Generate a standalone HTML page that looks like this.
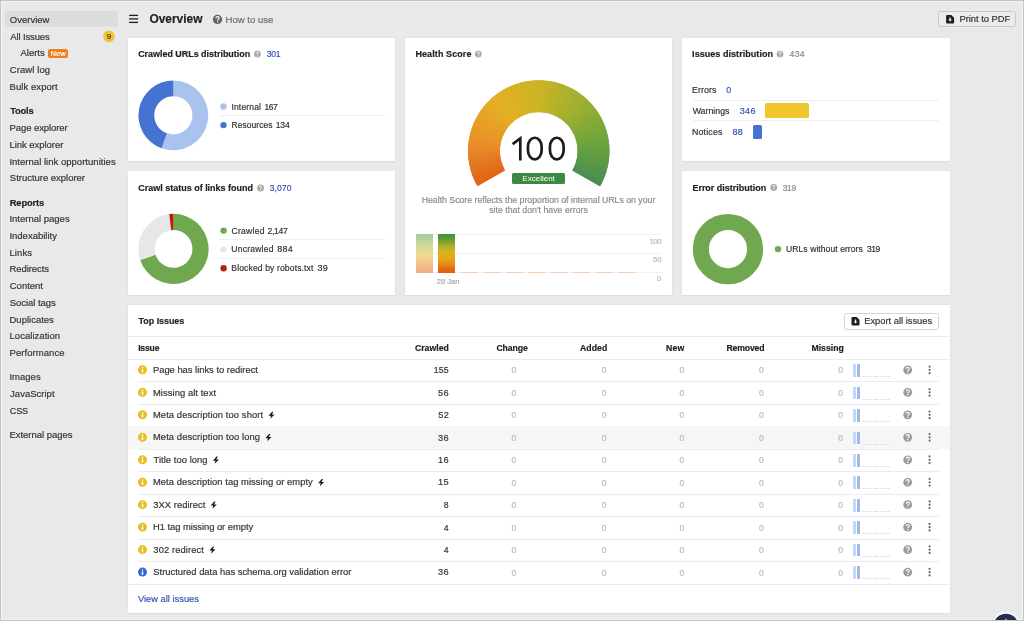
<!DOCTYPE html>
<html><head><meta charset="utf-8"><title>Overview</title>
<style>
html,body{margin:0;padding:0;}
body{width:1024px;height:621px;overflow:hidden;background:#e8e9eb;font-family:"Liberation Sans",sans-serif;}
#p{position:relative;width:1024px;height:621px;overflow:hidden;background:#e8e9eb;}
.t{position:absolute;white-space:nowrap;-webkit-text-stroke:0.18px currentColor;}
#tx{position:absolute;left:0;top:0;width:1024px;height:621px;will-change:transform;}
.b{position:absolute;}
#ov{position:absolute;left:0;top:0;}
#fr{position:absolute;left:0;top:0;width:1022px;height:619px;border:1px solid #c3c4c4;pointer-events:none;}
#fi{position:absolute;left:1px;top:1px;width:1020px;height:617px;border:1px solid #f1f2f4;pointer-events:none;}
</style></head><body><div id="p">
<div id="fi"></div>
<div class="b" style="left:5.00px;top:11.00px;width:112.50px;height:16.00px;background:#dcdddf;border-radius:2.5px;"></div>
<div class="b" style="left:48.10px;top:48.70px;width:20.10px;height:9.10px;background:#e8821e;border-radius:2px;"></div>
<div class="b" style="left:937.90px;top:10.60px;width:78.30px;height:16.90px;background:#ebecee;border:1px solid #c7c8cb;border-radius:2.5px;box-sizing:border-box;"></div>
<div class="b" style="left:127.80px;top:37.90px;width:267.30px;height:122.95px;background:#fff;box-shadow:0 0 1.2px rgba(50,55,75,0.10),0 1px 1px rgba(40,50,70,0.04);"></div>
<div class="b" style="left:127.80px;top:171.10px;width:267.30px;height:124.10px;background:#fff;box-shadow:0 0 1.2px rgba(50,55,75,0.10),0 1px 1px rgba(40,50,70,0.04);"></div>
<div class="b" style="left:404.95px;top:37.90px;width:267.35px;height:257.30px;background:#fff;box-shadow:0 0 1.2px rgba(50,55,75,0.10),0 1px 1px rgba(40,50,70,0.04);"></div>
<div class="b" style="left:682.35px;top:37.90px;width:267.30px;height:122.95px;background:#fff;box-shadow:0 0 1.2px rgba(50,55,75,0.10),0 1px 1px rgba(40,50,70,0.04);"></div>
<div class="b" style="left:682.35px;top:171.10px;width:267.30px;height:124.10px;background:#fff;box-shadow:0 0 1.2px rgba(50,55,75,0.10),0 1px 1px rgba(40,50,70,0.04);"></div>
<div class="b" style="left:127.80px;top:304.80px;width:821.85px;height:308.00px;background:#fff;box-shadow:0 0 1.2px rgba(50,55,75,0.10),0 1px 1px rgba(40,50,70,0.04);"></div>
<div class="b" style="left:219.00px;top:115.00px;width:166.00px;height:1.00px;background:#eeeff0;"></div>
<div class="b" style="left:219.00px;top:239.20px;width:166.00px;height:1.00px;background:#eeeff0;"></div>
<div class="b" style="left:219.00px;top:258.00px;width:166.00px;height:1.00px;background:#eeeff0;"></div>
<div class="b" style="left:512.20px;top:173.00px;width:52.80px;height:11.10px;background:#3c8a41;border-radius:1.5px;"></div>
<div class="b" style="left:415.50px;top:233.70px;width:245.00px;height:1.00px;background:#f0f0f1;"></div>
<div class="b" style="left:415.50px;top:252.70px;width:245.00px;height:1.00px;background:#f0f0f1;"></div>
<div class="b" style="left:415.50px;top:272.40px;width:245.00px;height:1.00px;background:#f0f0f1;"></div>
<div class="b" style="left:415.90px;top:234.00px;width:17.00px;height:39.00px;background:linear-gradient(to bottom,#a6cc9d 0%,#b4d19c 14%,#d3da98 32%,#ebdb8d 52%,#f2cd8b 70%,#f1b888 84%,#f0ae87 100%);"></div>
<div class="b" style="left:438.10px;top:234.00px;width:17.10px;height:39.00px;background:linear-gradient(to bottom,#3f8f3c 0%,#5a9a36 12%,#a8ad2a 30%,#d8b220 45%,#e8a81e 62%,#e68a1a 78%,#e3680f 90%,#e05e0d 100%);"></div>
<div class="b" style="left:461.10px;top:272.00px;width:17.00px;height:1.20px;background:#f6cdb0;"></div>
<div class="b" style="left:483.50px;top:272.00px;width:17.00px;height:1.20px;background:#f6cdb0;"></div>
<div class="b" style="left:505.90px;top:272.00px;width:17.00px;height:1.20px;background:#f6cdb0;"></div>
<div class="b" style="left:528.30px;top:272.00px;width:17.00px;height:1.20px;background:#f6cdb0;"></div>
<div class="b" style="left:550.70px;top:272.00px;width:17.00px;height:1.20px;background:#f6cdb0;"></div>
<div class="b" style="left:573.10px;top:272.00px;width:17.00px;height:1.20px;background:#f6cdb0;"></div>
<div class="b" style="left:595.50px;top:272.00px;width:17.00px;height:1.20px;background:#f6cdb0;"></div>
<div class="b" style="left:617.90px;top:272.00px;width:17.00px;height:1.20px;background:#f6cdb0;"></div>
<div class="b" style="left:692.60px;top:99.60px;width:246.40px;height:1.00px;background:#eeeff0;"></div>
<div class="b" style="left:765.40px;top:103.40px;width:43.60px;height:14.20px;background:#f0c62a;border-radius:1.5px;"></div>
<div class="b" style="left:692.60px;top:120.20px;width:246.40px;height:1.00px;background:#eeeff0;"></div>
<div class="b" style="left:753.20px;top:124.60px;width:8.80px;height:14.20px;background:#4673d1;border-radius:1.5px;"></div>
<div class="b" style="left:843.70px;top:313.10px;width:95.50px;height:16.50px;background:#fff;border:1px solid #d4d5d7;border-radius:2.5px;box-sizing:border-box;"></div>
<div class="b" style="left:127.80px;top:336.40px;width:821.85px;height:1.00px;background:#ebecee;"></div>
<div class="b" style="left:127.80px;top:358.90px;width:821.85px;height:1.00px;background:#ebecee;"></div>
<div class="b" style="left:853.10px;top:364.10px;width:2.90px;height:12.60px;background:#c6d6f3;"></div>
<div class="b" style="left:857.20px;top:364.10px;width:2.90px;height:12.60px;background:#9eb9ea;"></div>
<div class="b" style="left:861.60px;top:376.10px;width:2.90px;height:0.80px;background:#e3e5e9;"></div>
<div class="b" style="left:865.30px;top:376.10px;width:2.90px;height:0.80px;background:#e3e5e9;"></div>
<div class="b" style="left:869.00px;top:376.10px;width:2.90px;height:0.80px;background:#e3e5e9;"></div>
<div class="b" style="left:872.70px;top:376.10px;width:2.90px;height:0.80px;background:#e3e5e9;"></div>
<div class="b" style="left:876.40px;top:376.10px;width:2.90px;height:0.80px;background:#e3e5e9;"></div>
<div class="b" style="left:880.10px;top:376.10px;width:2.90px;height:0.80px;background:#e3e5e9;"></div>
<div class="b" style="left:883.80px;top:376.10px;width:2.90px;height:0.80px;background:#e3e5e9;"></div>
<div class="b" style="left:887.50px;top:376.10px;width:2.90px;height:0.80px;background:#e3e5e9;"></div>
<div class="b" style="left:138.00px;top:381.30px;width:801.20px;height:1.00px;background:#ebecee;"></div>
<div class="b" style="left:853.10px;top:386.57px;width:2.90px;height:12.60px;background:#c6d6f3;"></div>
<div class="b" style="left:857.20px;top:386.57px;width:2.90px;height:12.60px;background:#9eb9ea;"></div>
<div class="b" style="left:861.60px;top:398.57px;width:2.90px;height:0.80px;background:#e3e5e9;"></div>
<div class="b" style="left:865.30px;top:398.57px;width:2.90px;height:0.80px;background:#e3e5e9;"></div>
<div class="b" style="left:869.00px;top:398.57px;width:2.90px;height:0.80px;background:#e3e5e9;"></div>
<div class="b" style="left:872.70px;top:398.57px;width:2.90px;height:0.80px;background:#e3e5e9;"></div>
<div class="b" style="left:876.40px;top:398.57px;width:2.90px;height:0.80px;background:#e3e5e9;"></div>
<div class="b" style="left:880.10px;top:398.57px;width:2.90px;height:0.80px;background:#e3e5e9;"></div>
<div class="b" style="left:883.80px;top:398.57px;width:2.90px;height:0.80px;background:#e3e5e9;"></div>
<div class="b" style="left:887.50px;top:398.57px;width:2.90px;height:0.80px;background:#e3e5e9;"></div>
<div class="b" style="left:138.00px;top:403.77px;width:801.20px;height:1.00px;background:#ebecee;"></div>
<div class="b" style="left:853.10px;top:409.04px;width:2.90px;height:12.60px;background:#c6d6f3;"></div>
<div class="b" style="left:857.20px;top:409.04px;width:2.90px;height:12.60px;background:#9eb9ea;"></div>
<div class="b" style="left:861.60px;top:421.04px;width:2.90px;height:0.80px;background:#e3e5e9;"></div>
<div class="b" style="left:865.30px;top:421.04px;width:2.90px;height:0.80px;background:#e3e5e9;"></div>
<div class="b" style="left:869.00px;top:421.04px;width:2.90px;height:0.80px;background:#e3e5e9;"></div>
<div class="b" style="left:872.70px;top:421.04px;width:2.90px;height:0.80px;background:#e3e5e9;"></div>
<div class="b" style="left:876.40px;top:421.04px;width:2.90px;height:0.80px;background:#e3e5e9;"></div>
<div class="b" style="left:880.10px;top:421.04px;width:2.90px;height:0.80px;background:#e3e5e9;"></div>
<div class="b" style="left:883.80px;top:421.04px;width:2.90px;height:0.80px;background:#e3e5e9;"></div>
<div class="b" style="left:887.50px;top:421.04px;width:2.90px;height:0.80px;background:#e3e5e9;"></div>
<div class="b" style="left:138.00px;top:426.24px;width:801.20px;height:1.00px;background:#ebecee;"></div>
<div class="b" style="left:127.80px;top:426.21px;width:821.85px;height:22.50px;background:#f6f6f7;"></div>
<div class="b" style="left:853.10px;top:431.51px;width:2.90px;height:12.60px;background:#c6d6f3;"></div>
<div class="b" style="left:857.20px;top:431.51px;width:2.90px;height:12.60px;background:#9eb9ea;"></div>
<div class="b" style="left:861.60px;top:443.51px;width:2.90px;height:0.80px;background:#e3e5e9;"></div>
<div class="b" style="left:865.30px;top:443.51px;width:2.90px;height:0.80px;background:#e3e5e9;"></div>
<div class="b" style="left:869.00px;top:443.51px;width:2.90px;height:0.80px;background:#e3e5e9;"></div>
<div class="b" style="left:872.70px;top:443.51px;width:2.90px;height:0.80px;background:#e3e5e9;"></div>
<div class="b" style="left:876.40px;top:443.51px;width:2.90px;height:0.80px;background:#e3e5e9;"></div>
<div class="b" style="left:880.10px;top:443.51px;width:2.90px;height:0.80px;background:#e3e5e9;"></div>
<div class="b" style="left:883.80px;top:443.51px;width:2.90px;height:0.80px;background:#e3e5e9;"></div>
<div class="b" style="left:887.50px;top:443.51px;width:2.90px;height:0.80px;background:#e3e5e9;"></div>
<div class="b" style="left:138.00px;top:448.71px;width:801.20px;height:1.00px;background:#ebecee;"></div>
<div class="b" style="left:853.10px;top:453.98px;width:2.90px;height:12.60px;background:#c6d6f3;"></div>
<div class="b" style="left:857.20px;top:453.98px;width:2.90px;height:12.60px;background:#9eb9ea;"></div>
<div class="b" style="left:861.60px;top:465.98px;width:2.90px;height:0.80px;background:#e3e5e9;"></div>
<div class="b" style="left:865.30px;top:465.98px;width:2.90px;height:0.80px;background:#e3e5e9;"></div>
<div class="b" style="left:869.00px;top:465.98px;width:2.90px;height:0.80px;background:#e3e5e9;"></div>
<div class="b" style="left:872.70px;top:465.98px;width:2.90px;height:0.80px;background:#e3e5e9;"></div>
<div class="b" style="left:876.40px;top:465.98px;width:2.90px;height:0.80px;background:#e3e5e9;"></div>
<div class="b" style="left:880.10px;top:465.98px;width:2.90px;height:0.80px;background:#e3e5e9;"></div>
<div class="b" style="left:883.80px;top:465.98px;width:2.90px;height:0.80px;background:#e3e5e9;"></div>
<div class="b" style="left:887.50px;top:465.98px;width:2.90px;height:0.80px;background:#e3e5e9;"></div>
<div class="b" style="left:138.00px;top:471.18px;width:801.20px;height:1.00px;background:#ebecee;"></div>
<div class="b" style="left:853.10px;top:476.45px;width:2.90px;height:12.60px;background:#c6d6f3;"></div>
<div class="b" style="left:857.20px;top:476.45px;width:2.90px;height:12.60px;background:#9eb9ea;"></div>
<div class="b" style="left:861.60px;top:488.45px;width:2.90px;height:0.80px;background:#e3e5e9;"></div>
<div class="b" style="left:865.30px;top:488.45px;width:2.90px;height:0.80px;background:#e3e5e9;"></div>
<div class="b" style="left:869.00px;top:488.45px;width:2.90px;height:0.80px;background:#e3e5e9;"></div>
<div class="b" style="left:872.70px;top:488.45px;width:2.90px;height:0.80px;background:#e3e5e9;"></div>
<div class="b" style="left:876.40px;top:488.45px;width:2.90px;height:0.80px;background:#e3e5e9;"></div>
<div class="b" style="left:880.10px;top:488.45px;width:2.90px;height:0.80px;background:#e3e5e9;"></div>
<div class="b" style="left:883.80px;top:488.45px;width:2.90px;height:0.80px;background:#e3e5e9;"></div>
<div class="b" style="left:887.50px;top:488.45px;width:2.90px;height:0.80px;background:#e3e5e9;"></div>
<div class="b" style="left:138.00px;top:493.65px;width:801.20px;height:1.00px;background:#ebecee;"></div>
<div class="b" style="left:853.10px;top:498.92px;width:2.90px;height:12.60px;background:#c6d6f3;"></div>
<div class="b" style="left:857.20px;top:498.92px;width:2.90px;height:12.60px;background:#9eb9ea;"></div>
<div class="b" style="left:861.60px;top:510.92px;width:2.90px;height:0.80px;background:#e3e5e9;"></div>
<div class="b" style="left:865.30px;top:510.92px;width:2.90px;height:0.80px;background:#e3e5e9;"></div>
<div class="b" style="left:869.00px;top:510.92px;width:2.90px;height:0.80px;background:#e3e5e9;"></div>
<div class="b" style="left:872.70px;top:510.92px;width:2.90px;height:0.80px;background:#e3e5e9;"></div>
<div class="b" style="left:876.40px;top:510.92px;width:2.90px;height:0.80px;background:#e3e5e9;"></div>
<div class="b" style="left:880.10px;top:510.92px;width:2.90px;height:0.80px;background:#e3e5e9;"></div>
<div class="b" style="left:883.80px;top:510.92px;width:2.90px;height:0.80px;background:#e3e5e9;"></div>
<div class="b" style="left:887.50px;top:510.92px;width:2.90px;height:0.80px;background:#e3e5e9;"></div>
<div class="b" style="left:138.00px;top:516.12px;width:801.20px;height:1.00px;background:#ebecee;"></div>
<div class="b" style="left:853.10px;top:521.39px;width:2.90px;height:12.60px;background:#c6d6f3;"></div>
<div class="b" style="left:857.20px;top:521.39px;width:2.90px;height:12.60px;background:#9eb9ea;"></div>
<div class="b" style="left:861.60px;top:533.39px;width:2.90px;height:0.80px;background:#e3e5e9;"></div>
<div class="b" style="left:865.30px;top:533.39px;width:2.90px;height:0.80px;background:#e3e5e9;"></div>
<div class="b" style="left:869.00px;top:533.39px;width:2.90px;height:0.80px;background:#e3e5e9;"></div>
<div class="b" style="left:872.70px;top:533.39px;width:2.90px;height:0.80px;background:#e3e5e9;"></div>
<div class="b" style="left:876.40px;top:533.39px;width:2.90px;height:0.80px;background:#e3e5e9;"></div>
<div class="b" style="left:880.10px;top:533.39px;width:2.90px;height:0.80px;background:#e3e5e9;"></div>
<div class="b" style="left:883.80px;top:533.39px;width:2.90px;height:0.80px;background:#e3e5e9;"></div>
<div class="b" style="left:887.50px;top:533.39px;width:2.90px;height:0.80px;background:#e3e5e9;"></div>
<div class="b" style="left:138.00px;top:538.59px;width:801.20px;height:1.00px;background:#ebecee;"></div>
<div class="b" style="left:853.10px;top:543.86px;width:2.90px;height:12.60px;background:#c6d6f3;"></div>
<div class="b" style="left:857.20px;top:543.86px;width:2.90px;height:12.60px;background:#9eb9ea;"></div>
<div class="b" style="left:861.60px;top:555.86px;width:2.90px;height:0.80px;background:#e3e5e9;"></div>
<div class="b" style="left:865.30px;top:555.86px;width:2.90px;height:0.80px;background:#e3e5e9;"></div>
<div class="b" style="left:869.00px;top:555.86px;width:2.90px;height:0.80px;background:#e3e5e9;"></div>
<div class="b" style="left:872.70px;top:555.86px;width:2.90px;height:0.80px;background:#e3e5e9;"></div>
<div class="b" style="left:876.40px;top:555.86px;width:2.90px;height:0.80px;background:#e3e5e9;"></div>
<div class="b" style="left:880.10px;top:555.86px;width:2.90px;height:0.80px;background:#e3e5e9;"></div>
<div class="b" style="left:883.80px;top:555.86px;width:2.90px;height:0.80px;background:#e3e5e9;"></div>
<div class="b" style="left:887.50px;top:555.86px;width:2.90px;height:0.80px;background:#e3e5e9;"></div>
<div class="b" style="left:138.00px;top:561.06px;width:801.20px;height:1.00px;background:#ebecee;"></div>
<div class="b" style="left:853.10px;top:566.33px;width:2.90px;height:12.60px;background:#c6d6f3;"></div>
<div class="b" style="left:857.20px;top:566.33px;width:2.90px;height:12.60px;background:#9eb9ea;"></div>
<div class="b" style="left:861.60px;top:578.33px;width:2.90px;height:0.80px;background:#e3e5e9;"></div>
<div class="b" style="left:865.30px;top:578.33px;width:2.90px;height:0.80px;background:#e3e5e9;"></div>
<div class="b" style="left:869.00px;top:578.33px;width:2.90px;height:0.80px;background:#e3e5e9;"></div>
<div class="b" style="left:872.70px;top:578.33px;width:2.90px;height:0.80px;background:#e3e5e9;"></div>
<div class="b" style="left:876.40px;top:578.33px;width:2.90px;height:0.80px;background:#e3e5e9;"></div>
<div class="b" style="left:880.10px;top:578.33px;width:2.90px;height:0.80px;background:#e3e5e9;"></div>
<div class="b" style="left:883.80px;top:578.33px;width:2.90px;height:0.80px;background:#e3e5e9;"></div>
<div class="b" style="left:887.50px;top:578.33px;width:2.90px;height:0.80px;background:#e3e5e9;"></div>
<div class="b" style="left:127.80px;top:583.53px;width:821.85px;height:1.00px;background:#ebecee;"></div>
<svg id="ov" width="1024" height="621" viewBox="0 0 1024 621">
<circle cx="109" cy="36.4" r="5.8" fill="#f0c62a"/>
<rect x="129.1" y="14.75" width="9" height="1.3" fill="#222"/>
<rect x="129.1" y="18.25" width="9" height="1.3" fill="#222"/>
<rect x="129.1" y="21.75" width="9" height="1.3" fill="#222"/>
<g transform="translate(217.50,19.40) scale(1.022)"><circle r="4.5" fill="#636363"/><path d="M-1.55,-1.1C-1.55,-2.1 -0.85,-2.7 0.05,-2.7C0.95,-2.7 1.6,-2.1 1.6,-1.3C1.6,-0.2 0.1,-0.1 0.1,1.0" fill="none" stroke="#fff" stroke-width="1.15"/><circle cx="0.1" cy="2.45" r="0.72" fill="#fff"/></g>
<g transform="translate(946.10,15.00)"><path d="M1,0H5.2L8,2.8V7.6Q8,8.6 7,8.6H1Q0,8.6 0,7.6V1Q0,0 1,0Z" fill="#1f1f1f"/><path d="M3.4,2.6H4.6V4.6H5.8L4,6.6L2.2,4.6H3.4Z" fill="#fff"/></g>
<g transform="translate(257.40,54.10) scale(0.756)"><circle r="4.5" fill="#a8a8a8"/><path d="M-1.55,-1.1C-1.55,-2.1 -0.85,-2.7 0.05,-2.7C0.95,-2.7 1.6,-2.1 1.6,-1.3C1.6,-0.2 0.1,-0.1 0.1,1.0" fill="none" stroke="#fff" stroke-width="1.15"/><circle cx="0.1" cy="2.45" r="0.72" fill="#fff"/></g>
<path d="M173.35,80.45A34.9,34.9 0 1 1 161.59,148.21L166.91,133.33A19.1,19.1 0 1 0 173.35,96.25Z" fill="#a9c3ee"/>
<path d="M161.59,148.21A34.9,34.9 0 0 1 173.35,80.45L173.35,96.25A19.1,19.1 0 0 0 166.91,133.33Z" fill="#4673d1"/>
<circle cx="223.5" cy="106.5" r="3.2" fill="#a9c3ee"/>
<circle cx="223.5" cy="125.1" r="3.2" fill="#4673d1"/>
<g transform="translate(260.60,188.00) scale(0.756)"><circle r="4.5" fill="#a8a8a8"/><path d="M-1.55,-1.1C-1.55,-2.1 -0.85,-2.7 0.05,-2.7C0.95,-2.7 1.6,-2.1 1.6,-1.3C1.6,-0.2 0.1,-0.1 0.1,1.0" fill="none" stroke="#fff" stroke-width="1.15"/><circle cx="0.1" cy="2.45" r="0.72" fill="#fff"/></g>
<path d="M173.50,213.80A35.1,35.1 0 1 1 140.16,259.88L155.55,254.81A18.9,18.9 0 1 0 173.50,230.00Z" fill="#6fa84f"/>
<path d="M140.16,259.88A35.1,35.1 0 0 1 169.22,214.06L171.20,230.14A18.9,18.9 0 0 0 155.55,254.81Z" fill="#e6e7e9"/>
<path d="M169.22,214.06A35.1,35.1 0 0 1 173.50,213.80L173.50,230.00A18.9,18.9 0 0 0 171.20,230.14Z" fill="#b3200f"/>
<circle cx="223.6" cy="230.60" r="3.2" fill="#6fa84f"/>
<circle cx="223.6" cy="249.40" r="3.2" fill="#e6e7e9"/>
<circle cx="223.6" cy="268.20" r="3.2" fill="#b3200f"/>
<g transform="translate(478.30,54.10) scale(0.756)"><circle r="4.5" fill="#a8a8a8"/><path d="M-1.55,-1.1C-1.55,-2.1 -0.85,-2.7 0.05,-2.7C0.95,-2.7 1.6,-2.1 1.6,-1.3C1.6,-0.2 0.1,-0.1 0.1,1.0" fill="none" stroke="#fff" stroke-width="1.15"/><circle cx="0.1" cy="2.45" r="0.72" fill="#fff"/></g>
<path d="M477.52,186.35A70.7,70.7 0 0 1 475.21,181.99L503.88,168.01A38.8,38.8 0 0 0 505.15,170.40Z" fill="rgb(226, 99, 26)"/>
<path d="M476.33,184.19A70.7,70.7 0 0 1 474.16,179.76L503.30,166.78A38.8,38.8 0 0 0 504.49,169.22Z" fill="rgb(226, 102, 27)"/>
<path d="M475.21,181.99A70.7,70.7 0 0 1 473.20,177.48L502.78,165.53A38.8,38.8 0 0 0 503.88,168.01Z" fill="rgb(227, 104, 28)"/>
<path d="M474.16,179.76A70.7,70.7 0 0 1 472.31,175.18L502.29,164.27A38.8,38.8 0 0 0 503.30,166.78Z" fill="rgb(227, 106, 28)"/>
<path d="M473.20,177.48A70.7,70.7 0 0 1 471.51,172.85L501.85,162.99A38.8,38.8 0 0 0 502.78,165.53Z" fill="rgb(227, 109, 29)"/>
<path d="M472.31,175.18A70.7,70.7 0 0 1 470.79,170.49L501.45,161.69A38.8,38.8 0 0 0 502.29,164.27Z" fill="rgb(228, 111, 30)"/>
<path d="M471.51,172.85A70.7,70.7 0 0 1 470.15,168.10L501.10,160.39A38.8,38.8 0 0 0 501.85,162.99Z" fill="rgb(228, 114, 31)"/>
<path d="M470.79,170.49A70.7,70.7 0 0 1 469.59,165.70L500.80,159.07A38.8,38.8 0 0 0 501.45,161.69Z" fill="rgb(228, 116, 31)"/>
<path d="M470.15,168.10A70.7,70.7 0 0 1 469.12,163.28L500.54,157.74A38.8,38.8 0 0 0 501.10,160.39Z" fill="rgb(229, 118, 32)"/>
<path d="M469.59,165.70A70.7,70.7 0 0 1 468.74,160.84L500.33,156.40A38.8,38.8 0 0 0 500.80,159.07Z" fill="rgb(229, 121, 33)"/>
<path d="M469.12,163.28A70.7,70.7 0 0 1 468.44,158.39L500.16,155.06A38.8,38.8 0 0 0 500.54,157.74Z" fill="rgb(229, 123, 33)"/>
<path d="M468.74,160.84A70.7,70.7 0 0 1 468.22,155.93L500.04,153.71A38.8,38.8 0 0 0 500.33,156.40Z" fill="rgb(229, 126, 34)"/>
<path d="M468.44,158.39A70.7,70.7 0 0 1 468.09,153.47L499.97,152.35A38.8,38.8 0 0 0 500.16,155.06Z" fill="rgb(230, 128, 35)"/>
<path d="M468.22,155.93A70.7,70.7 0 0 1 468.05,151.00L499.95,151.00A38.8,38.8 0 0 0 500.04,153.71Z" fill="rgb(230, 130, 35)"/>
<path d="M468.09,153.47A70.7,70.7 0 0 1 468.09,148.53L499.97,149.65A38.8,38.8 0 0 0 499.97,152.35Z" fill="rgb(230, 133, 36)"/>
<path d="M468.05,151.00A70.7,70.7 0 0 1 468.22,146.07L500.04,148.29A38.8,38.8 0 0 0 499.95,151.00Z" fill="rgb(231, 135, 37)"/>
<path d="M468.09,148.53A70.7,70.7 0 0 1 468.44,143.61L500.16,146.94A38.8,38.8 0 0 0 499.97,149.65Z" fill="rgb(231, 138, 38)"/>
<path d="M468.22,146.07A70.7,70.7 0 0 1 468.74,141.16L500.33,145.60A38.8,38.8 0 0 0 500.04,148.29Z" fill="rgb(231, 140, 38)"/>
<path d="M468.44,143.61A70.7,70.7 0 0 1 469.12,138.72L500.54,144.26A38.8,38.8 0 0 0 500.16,146.94Z" fill="rgb(232, 142, 39)"/>
<path d="M468.74,141.16A70.7,70.7 0 0 1 469.59,136.30L500.80,142.93A38.8,38.8 0 0 0 500.33,145.60Z" fill="rgb(232, 145, 40)"/>
<path d="M469.12,138.72A70.7,70.7 0 0 1 470.15,133.90L501.10,141.61A38.8,38.8 0 0 0 500.54,144.26Z" fill="rgb(232, 147, 40)"/>
<path d="M469.59,136.30A70.7,70.7 0 0 1 470.79,131.51L501.45,140.31A38.8,38.8 0 0 0 500.80,142.93Z" fill="rgb(232, 148, 40)"/>
<path d="M470.15,133.90A70.7,70.7 0 0 1 471.51,129.15L501.85,139.01A38.8,38.8 0 0 0 501.10,141.61Z" fill="rgb(232, 150, 40)"/>
<path d="M470.79,131.51A70.7,70.7 0 0 1 472.31,126.82L502.29,137.73A38.8,38.8 0 0 0 501.45,140.31Z" fill="rgb(231, 151, 39)"/>
<path d="M471.51,129.15A70.7,70.7 0 0 1 473.20,124.52L502.78,136.47A38.8,38.8 0 0 0 501.85,139.01Z" fill="rgb(231, 153, 39)"/>
<path d="M472.31,126.82A70.7,70.7 0 0 1 474.16,122.24L503.30,135.22A38.8,38.8 0 0 0 502.29,137.73Z" fill="rgb(231, 154, 39)"/>
<path d="M473.20,124.52A70.7,70.7 0 0 1 475.21,120.01L503.88,133.99A38.8,38.8 0 0 0 502.78,136.47Z" fill="rgb(231, 156, 39)"/>
<path d="M474.16,122.24A70.7,70.7 0 0 1 476.33,117.81L504.49,132.78A38.8,38.8 0 0 0 503.30,135.22Z" fill="rgb(231, 157, 38)"/>
<path d="M475.21,120.01A70.7,70.7 0 0 1 477.52,115.65L505.15,131.60A38.8,38.8 0 0 0 503.88,133.99Z" fill="rgb(231, 159, 38)"/>
<path d="M476.33,117.81A70.7,70.7 0 0 1 478.79,113.53L505.85,130.44A38.8,38.8 0 0 0 504.49,132.78Z" fill="rgb(231, 160, 38)"/>
<path d="M477.52,115.65A70.7,70.7 0 0 1 480.14,111.47L506.58,129.30A38.8,38.8 0 0 0 505.15,131.60Z" fill="rgb(230, 162, 38)"/>
<path d="M478.79,113.53A70.7,70.7 0 0 1 481.55,109.44L507.36,128.19A38.8,38.8 0 0 0 505.85,130.44Z" fill="rgb(230, 163, 38)"/>
<path d="M480.14,111.47A70.7,70.7 0 0 1 483.04,107.47L508.18,127.11A38.8,38.8 0 0 0 506.58,129.30Z" fill="rgb(230, 165, 38)"/>
<path d="M481.55,109.44A70.7,70.7 0 0 1 484.59,105.55L509.03,126.06A38.8,38.8 0 0 0 507.36,128.19Z" fill="rgb(230, 166, 37)"/>
<path d="M483.04,107.47A70.7,70.7 0 0 1 486.21,103.69L509.92,125.04A38.8,38.8 0 0 0 508.18,127.11Z" fill="rgb(230, 168, 37)"/>
<path d="M484.59,105.55A70.7,70.7 0 0 1 487.89,101.89L510.84,124.05A38.8,38.8 0 0 0 509.03,126.06Z" fill="rgb(230, 169, 37)"/>
<path d="M486.21,103.69A70.7,70.7 0 0 1 489.64,100.14L511.80,123.09A38.8,38.8 0 0 0 509.92,125.04Z" fill="rgb(230, 171, 37)"/>
<path d="M487.89,101.89A70.7,70.7 0 0 1 491.44,98.46L512.79,122.17A38.8,38.8 0 0 0 510.84,124.05Z" fill="rgb(229, 172, 36)"/>
<path d="M489.64,100.14A70.7,70.7 0 0 1 493.30,96.84L513.81,121.28A38.8,38.8 0 0 0 511.80,123.09Z" fill="rgb(229, 174, 36)"/>
<path d="M491.44,98.46A70.7,70.7 0 0 1 495.22,95.29L514.86,120.43A38.8,38.8 0 0 0 512.79,122.17Z" fill="rgb(229, 175, 36)"/>
<path d="M493.30,96.84A70.7,70.7 0 0 1 497.19,93.80L515.94,119.61A38.8,38.8 0 0 0 513.81,121.28Z" fill="rgb(228, 176, 36)"/>
<path d="M495.22,95.29A70.7,70.7 0 0 1 499.22,92.39L517.05,118.83A38.8,38.8 0 0 0 514.86,120.43Z" fill="rgb(227, 176, 36)"/>
<path d="M497.19,93.80A70.7,70.7 0 0 1 501.28,91.04L518.19,118.10A38.8,38.8 0 0 0 515.94,119.61Z" fill="rgb(226, 176, 36)"/>
<path d="M499.22,92.39A70.7,70.7 0 0 1 503.40,89.77L519.35,117.40A38.8,38.8 0 0 0 517.05,118.83Z" fill="rgb(224, 177, 36)"/>
<path d="M501.28,91.04A70.7,70.7 0 0 1 505.56,88.58L520.53,116.74A38.8,38.8 0 0 0 518.19,118.10Z" fill="rgb(223, 177, 36)"/>
<path d="M503.40,89.77A70.7,70.7 0 0 1 507.76,87.46L521.74,116.13A38.8,38.8 0 0 0 519.35,117.40Z" fill="rgb(222, 177, 36)"/>
<path d="M505.56,88.58A70.7,70.7 0 0 1 509.99,86.41L522.97,115.55A38.8,38.8 0 0 0 520.53,116.74Z" fill="rgb(221, 177, 36)"/>
<path d="M507.76,87.46A70.7,70.7 0 0 1 512.27,85.45L524.22,115.03A38.8,38.8 0 0 0 521.74,116.13Z" fill="rgb(219, 178, 36)"/>
<path d="M509.99,86.41A70.7,70.7 0 0 1 514.57,84.56L525.48,114.54A38.8,38.8 0 0 0 522.97,115.55Z" fill="rgb(218, 178, 36)"/>
<path d="M512.27,85.45A70.7,70.7 0 0 1 516.90,83.76L526.76,114.10A38.8,38.8 0 0 0 524.22,115.03Z" fill="rgb(217, 178, 36)"/>
<path d="M514.57,84.56A70.7,70.7 0 0 1 519.26,83.04L528.06,113.70A38.8,38.8 0 0 0 525.48,114.54Z" fill="rgb(215, 178, 37)"/>
<path d="M516.90,83.76A70.7,70.7 0 0 1 521.65,82.40L529.36,113.35A38.8,38.8 0 0 0 526.76,114.10Z" fill="rgb(214, 178, 37)"/>
<path d="M519.26,83.04A70.7,70.7 0 0 1 524.05,81.84L530.68,113.05A38.8,38.8 0 0 0 528.06,113.70Z" fill="rgb(213, 178, 37)"/>
<path d="M521.65,82.40A70.7,70.7 0 0 1 526.47,81.37L532.01,112.79A38.8,38.8 0 0 0 529.36,113.35Z" fill="rgb(211, 179, 37)"/>
<path d="M524.05,81.84A70.7,70.7 0 0 1 528.91,80.99L533.35,112.58A38.8,38.8 0 0 0 530.68,113.05Z" fill="rgb(210, 179, 37)"/>
<path d="M526.47,81.37A70.7,70.7 0 0 1 531.36,80.69L534.69,112.41A38.8,38.8 0 0 0 532.01,112.79Z" fill="rgb(209, 179, 37)"/>
<path d="M528.91,80.99A70.7,70.7 0 0 1 533.82,80.47L536.04,112.29A38.8,38.8 0 0 0 533.35,112.58Z" fill="rgb(208, 179, 37)"/>
<path d="M531.36,80.69A70.7,70.7 0 0 1 536.28,80.34L537.40,112.22A38.8,38.8 0 0 0 534.69,112.41Z" fill="rgb(206, 180, 37)"/>
<path d="M533.82,80.47A70.7,70.7 0 0 1 538.75,80.30L538.75,112.20A38.8,38.8 0 0 0 536.04,112.29Z" fill="rgb(205, 180, 37)"/>
<path d="M536.28,80.34A70.7,70.7 0 0 1 541.22,80.34L540.10,112.22A38.8,38.8 0 0 0 537.40,112.22Z" fill="rgb(204, 180, 37)"/>
<path d="M538.75,80.30A70.7,70.7 0 0 1 543.68,80.47L541.46,112.29A38.8,38.8 0 0 0 538.75,112.20Z" fill="rgb(202, 180, 37)"/>
<path d="M541.22,80.34A70.7,70.7 0 0 1 546.14,80.69L542.81,112.41A38.8,38.8 0 0 0 540.10,112.22Z" fill="rgb(200, 180, 38)"/>
<path d="M543.68,80.47A70.7,70.7 0 0 1 548.59,80.99L544.15,112.58A38.8,38.8 0 0 0 541.46,112.29Z" fill="rgb(198, 180, 38)"/>
<path d="M546.14,80.69A70.7,70.7 0 0 1 551.03,81.37L545.49,112.79A38.8,38.8 0 0 0 542.81,112.41Z" fill="rgb(195, 179, 39)"/>
<path d="M548.59,80.99A70.7,70.7 0 0 1 553.45,81.84L546.82,113.05A38.8,38.8 0 0 0 544.15,112.58Z" fill="rgb(193, 179, 39)"/>
<path d="M551.03,81.37A70.7,70.7 0 0 1 555.85,82.40L548.14,113.35A38.8,38.8 0 0 0 545.49,112.79Z" fill="rgb(191, 179, 40)"/>
<path d="M553.45,81.84A70.7,70.7 0 0 1 558.24,83.04L549.44,113.70A38.8,38.8 0 0 0 546.82,113.05Z" fill="rgb(189, 179, 41)"/>
<path d="M555.85,82.40A70.7,70.7 0 0 1 560.60,83.76L550.74,114.10A38.8,38.8 0 0 0 548.14,113.35Z" fill="rgb(187, 178, 41)"/>
<path d="M558.24,83.04A70.7,70.7 0 0 1 562.93,84.56L552.02,114.54A38.8,38.8 0 0 0 549.44,113.70Z" fill="rgb(185, 178, 42)"/>
<path d="M560.60,83.76A70.7,70.7 0 0 1 565.23,85.45L553.28,115.03A38.8,38.8 0 0 0 550.74,114.10Z" fill="rgb(183, 178, 42)"/>
<path d="M562.93,84.56A70.7,70.7 0 0 1 567.51,86.41L554.53,115.55A38.8,38.8 0 0 0 552.02,114.54Z" fill="rgb(180, 178, 43)"/>
<path d="M565.23,85.45A70.7,70.7 0 0 1 569.74,87.46L555.76,116.13A38.8,38.8 0 0 0 553.28,115.03Z" fill="rgb(178, 178, 43)"/>
<path d="M567.51,86.41A70.7,70.7 0 0 1 571.94,88.58L556.97,116.74A38.8,38.8 0 0 0 554.53,115.55Z" fill="rgb(176, 178, 44)"/>
<path d="M569.74,87.46A70.7,70.7 0 0 1 574.10,89.77L558.15,117.40A38.8,38.8 0 0 0 555.76,116.13Z" fill="rgb(174, 177, 44)"/>
<path d="M571.94,88.58A70.7,70.7 0 0 1 576.22,91.04L559.31,118.10A38.8,38.8 0 0 0 556.97,116.74Z" fill="rgb(172, 177, 45)"/>
<path d="M574.10,89.77A70.7,70.7 0 0 1 578.28,92.39L560.45,118.83A38.8,38.8 0 0 0 558.15,117.40Z" fill="rgb(170, 177, 46)"/>
<path d="M576.22,91.04A70.7,70.7 0 0 1 580.31,93.80L561.56,119.61A38.8,38.8 0 0 0 559.31,118.10Z" fill="rgb(168, 177, 46)"/>
<path d="M578.28,92.39A70.7,70.7 0 0 1 582.28,95.29L562.64,120.43A38.8,38.8 0 0 0 560.45,118.83Z" fill="rgb(165, 176, 47)"/>
<path d="M580.31,93.80A70.7,70.7 0 0 1 584.20,96.84L563.69,121.28A38.8,38.8 0 0 0 561.56,119.61Z" fill="rgb(163, 176, 47)"/>
<path d="M582.28,95.29A70.7,70.7 0 0 1 586.06,98.46L564.71,122.17A38.8,38.8 0 0 0 562.64,120.43Z" fill="rgb(161, 176, 48)"/>
<path d="M584.20,96.84A70.7,70.7 0 0 1 587.86,100.14L565.70,123.09A38.8,38.8 0 0 0 563.69,121.28Z" fill="rgb(159, 176, 48)"/>
<path d="M586.06,98.46A70.7,70.7 0 0 1 589.61,101.89L566.66,124.05A38.8,38.8 0 0 0 564.71,122.17Z" fill="rgb(156, 175, 49)"/>
<path d="M587.86,100.14A70.7,70.7 0 0 1 591.29,103.69L567.58,125.04A38.8,38.8 0 0 0 565.70,123.09Z" fill="rgb(154, 175, 50)"/>
<path d="M589.61,101.89A70.7,70.7 0 0 1 592.91,105.55L568.47,126.06A38.8,38.8 0 0 0 566.66,124.05Z" fill="rgb(151, 174, 50)"/>
<path d="M591.29,103.69A70.7,70.7 0 0 1 594.46,107.47L569.32,127.11A38.8,38.8 0 0 0 567.58,125.04Z" fill="rgb(149, 174, 51)"/>
<path d="M592.91,105.55A70.7,70.7 0 0 1 595.95,109.44L570.14,128.19A38.8,38.8 0 0 0 568.47,126.06Z" fill="rgb(147, 173, 51)"/>
<path d="M594.46,107.47A70.7,70.7 0 0 1 597.36,111.47L570.92,129.30A38.8,38.8 0 0 0 569.32,127.11Z" fill="rgb(144, 172, 52)"/>
<path d="M595.95,109.44A70.7,70.7 0 0 1 598.71,113.53L571.65,130.44A38.8,38.8 0 0 0 570.14,128.19Z" fill="rgb(142, 172, 52)"/>
<path d="M597.36,111.47A70.7,70.7 0 0 1 599.98,115.65L572.35,131.60A38.8,38.8 0 0 0 570.92,129.30Z" fill="rgb(139, 171, 53)"/>
<path d="M598.71,113.53A70.7,70.7 0 0 1 601.17,117.81L573.01,132.78A38.8,38.8 0 0 0 571.65,130.44Z" fill="rgb(137, 171, 54)"/>
<path d="M599.98,115.65A70.7,70.7 0 0 1 602.29,120.01L573.62,133.99A38.8,38.8 0 0 0 572.35,131.60Z" fill="rgb(134, 170, 54)"/>
<path d="M601.17,117.81A70.7,70.7 0 0 1 603.34,122.24L574.20,135.22A38.8,38.8 0 0 0 573.01,132.78Z" fill="rgb(132, 170, 55)"/>
<path d="M602.29,120.01A70.7,70.7 0 0 1 604.30,124.52L574.72,136.47A38.8,38.8 0 0 0 573.62,133.99Z" fill="rgb(129, 169, 56)"/>
<path d="M603.34,122.24A70.7,70.7 0 0 1 605.19,126.82L575.21,137.73A38.8,38.8 0 0 0 574.20,135.22Z" fill="rgb(127, 169, 56)"/>
<path d="M604.30,124.52A70.7,70.7 0 0 1 605.99,129.15L575.65,139.01A38.8,38.8 0 0 0 574.72,136.47Z" fill="rgb(124, 168, 57)"/>
<path d="M605.19,126.82A70.7,70.7 0 0 1 606.71,131.51L576.05,140.31A38.8,38.8 0 0 0 575.21,137.73Z" fill="rgb(122, 167, 57)"/>
<path d="M605.99,129.15A70.7,70.7 0 0 1 607.35,133.90L576.40,141.61A38.8,38.8 0 0 0 575.65,139.01Z" fill="rgb(120, 167, 58)"/>
<path d="M606.71,131.51A70.7,70.7 0 0 1 607.91,136.30L576.70,142.93A38.8,38.8 0 0 0 576.05,140.31Z" fill="rgb(117, 166, 58)"/>
<path d="M607.35,133.90A70.7,70.7 0 0 1 608.38,138.72L576.96,144.26A38.8,38.8 0 0 0 576.40,141.61Z" fill="rgb(115, 166, 59)"/>
<path d="M607.91,136.30A70.7,70.7 0 0 1 608.76,141.16L577.17,145.60A38.8,38.8 0 0 0 576.70,142.93Z" fill="rgb(112, 165, 60)"/>
<path d="M608.38,138.72A70.7,70.7 0 0 1 609.06,143.61L577.34,146.94A38.8,38.8 0 0 0 576.96,144.26Z" fill="rgb(110, 164, 61)"/>
<path d="M608.76,141.16A70.7,70.7 0 0 1 609.28,146.07L577.46,148.29A38.8,38.8 0 0 0 577.17,145.60Z" fill="rgb(108, 163, 62)"/>
<path d="M609.06,143.61A70.7,70.7 0 0 1 609.41,148.53L577.53,149.65A38.8,38.8 0 0 0 577.34,146.94Z" fill="rgb(106, 162, 63)"/>
<path d="M609.28,146.07A70.7,70.7 0 0 1 609.45,151.00L577.55,151.00A38.8,38.8 0 0 0 577.46,148.29Z" fill="rgb(104, 161, 64)"/>
<path d="M609.41,148.53A70.7,70.7 0 0 1 609.41,153.47L577.53,152.35A38.8,38.8 0 0 0 577.53,149.65Z" fill="rgb(102, 160, 65)"/>
<path d="M609.45,151.00A70.7,70.7 0 0 1 609.28,155.93L577.46,153.71A38.8,38.8 0 0 0 577.55,151.00Z" fill="rgb(101, 159, 66)"/>
<path d="M609.41,153.47A70.7,70.7 0 0 1 609.06,158.39L577.34,155.06A38.8,38.8 0 0 0 577.53,152.35Z" fill="rgb(99, 158, 67)"/>
<path d="M609.28,155.93A70.7,70.7 0 0 1 608.76,160.84L577.17,156.40A38.8,38.8 0 0 0 577.46,153.71Z" fill="rgb(97, 156, 68)"/>
<path d="M609.06,158.39A70.7,70.7 0 0 1 608.38,163.28L576.96,157.74A38.8,38.8 0 0 0 577.34,155.06Z" fill="rgb(95, 155, 69)"/>
<path d="M608.76,160.84A70.7,70.7 0 0 1 607.91,165.70L576.70,159.07A38.8,38.8 0 0 0 577.17,156.40Z" fill="rgb(93, 154, 70)"/>
<path d="M608.38,163.28A70.7,70.7 0 0 1 607.35,168.10L576.40,160.39A38.8,38.8 0 0 0 576.96,157.74Z" fill="rgb(91, 153, 72)"/>
<path d="M607.91,165.70A70.7,70.7 0 0 1 606.71,170.49L576.05,161.69A38.8,38.8 0 0 0 576.70,159.07Z" fill="rgb(89, 152, 73)"/>
<path d="M607.35,168.10A70.7,70.7 0 0 1 605.99,172.85L575.65,162.99A38.8,38.8 0 0 0 576.40,160.39Z" fill="rgb(87, 151, 74)"/>
<path d="M606.71,170.49A70.7,70.7 0 0 1 605.19,175.18L575.21,164.27A38.8,38.8 0 0 0 576.05,161.69Z" fill="rgb(85, 149, 75)"/>
<path d="M605.99,172.85A70.7,70.7 0 0 1 604.30,177.48L574.72,165.53A38.8,38.8 0 0 0 575.65,162.99Z" fill="rgb(83, 148, 76)"/>
<path d="M605.19,175.18A70.7,70.7 0 0 1 603.34,179.76L574.20,166.78A38.8,38.8 0 0 0 575.21,164.27Z" fill="rgb(82, 147, 77)"/>
<path d="M604.30,177.48A70.7,70.7 0 0 1 602.29,181.99L573.62,168.01A38.8,38.8 0 0 0 574.72,165.53Z" fill="rgb(80, 146, 78)"/>
<path d="M603.34,179.76A70.7,70.7 0 0 1 601.17,184.19L573.01,169.22A38.8,38.8 0 0 0 574.20,166.78Z" fill="rgb(78, 145, 79)"/>
<path d="M602.29,181.99A70.7,70.7 0 0 1 599.98,186.35L572.35,170.40A38.8,38.8 0 0 0 573.62,168.01Z" fill="rgb(76, 144, 80)"/>
<path d="M601.17,184.19A70.7,70.7 0 0 1 599.98,186.35L572.35,170.40A38.8,38.8 0 0 0 573.01,169.22Z" fill="rgb(74, 143, 81)"/>
<g fill="none" stroke="#1c1c1c" stroke-width="2.7"><path d="M512.6,144.2L520.3,138.4V160.6" stroke-linejoin="miter"/><rect x="527.95" y="137.75" width="13.7" height="21.6" rx="6.85" ry="9.0"/><rect x="549.95" y="137.75" width="13.7" height="21.6" rx="6.85" ry="9.0"/></g>
<g transform="translate(780.00,54.10) scale(0.756)"><circle r="4.5" fill="#a8a8a8"/><path d="M-1.55,-1.1C-1.55,-2.1 -0.85,-2.7 0.05,-2.7C0.95,-2.7 1.6,-2.1 1.6,-1.3C1.6,-0.2 0.1,-0.1 0.1,1.0" fill="none" stroke="#fff" stroke-width="1.15"/><circle cx="0.1" cy="2.45" r="0.72" fill="#fff"/></g>
<g transform="translate(773.70,187.50) scale(0.756)"><circle r="4.5" fill="#a8a8a8"/><path d="M-1.55,-1.1C-1.55,-2.1 -0.85,-2.7 0.05,-2.7C0.95,-2.7 1.6,-2.1 1.6,-1.3C1.6,-0.2 0.1,-0.1 0.1,1.0" fill="none" stroke="#fff" stroke-width="1.15"/><circle cx="0.1" cy="2.45" r="0.72" fill="#fff"/></g>
<circle cx="727.95" cy="249.1" r="27.1" fill="none" stroke="#6fa84f" stroke-width="16"/>
<circle cx="778" cy="249.1" r="3.2" fill="#6fa84f"/>
<g transform="translate(851.50,316.90)"><path d="M1,0H5.2L8,2.8V7.6Q8,8.6 7,8.6H1Q0,8.6 0,7.6V1Q0,0 1,0Z" fill="#1f1f1f"/><path d="M3.4,2.6H4.6V4.6H5.8L4,6.6L2.2,4.6H3.4Z" fill="#fff"/></g>
<g transform="translate(142.50,369.85) scale(1.000)"><circle r="4.5" fill="#e9bf20"/><circle cx="0" cy="-2.1" r="0.8" fill="#fff"/><rect x="-0.75" y="-0.7" width="1.5" height="3.5" rx="0.3" fill="#fff"/></g>
<g transform="translate(907.70,369.90) scale(0.978)"><circle r="4.5" fill="#9b9b9b"/><path d="M-1.55,-1.1C-1.55,-2.1 -0.85,-2.7 0.05,-2.7C0.95,-2.7 1.6,-2.1 1.6,-1.3C1.6,-0.2 0.1,-0.1 0.1,1.0" fill="none" stroke="#fff" stroke-width="1.15"/><circle cx="0.1" cy="2.45" r="0.72" fill="#fff"/></g>
<circle cx="929.6" cy="366.60" r="1.12" fill="#6a6a6a"/>
<circle cx="929.6" cy="369.90" r="1.12" fill="#6a6a6a"/>
<circle cx="929.6" cy="373.20" r="1.12" fill="#6a6a6a"/>
<g transform="translate(142.50,392.32) scale(1.000)"><circle r="4.5" fill="#e9bf20"/><circle cx="0" cy="-2.1" r="0.8" fill="#fff"/><rect x="-0.75" y="-0.7" width="1.5" height="3.5" rx="0.3" fill="#fff"/></g>
<g transform="translate(907.70,392.37) scale(0.978)"><circle r="4.5" fill="#9b9b9b"/><path d="M-1.55,-1.1C-1.55,-2.1 -0.85,-2.7 0.05,-2.7C0.95,-2.7 1.6,-2.1 1.6,-1.3C1.6,-0.2 0.1,-0.1 0.1,1.0" fill="none" stroke="#fff" stroke-width="1.15"/><circle cx="0.1" cy="2.45" r="0.72" fill="#fff"/></g>
<circle cx="929.6" cy="389.07" r="1.12" fill="#6a6a6a"/>
<circle cx="929.6" cy="392.37" r="1.12" fill="#6a6a6a"/>
<circle cx="929.6" cy="395.67" r="1.12" fill="#6a6a6a"/>
<g transform="translate(142.50,414.79) scale(1.000)"><circle r="4.5" fill="#e9bf20"/><circle cx="0" cy="-2.1" r="0.8" fill="#fff"/><rect x="-0.75" y="-0.7" width="1.5" height="3.5" rx="0.3" fill="#fff"/></g>
<g transform="translate(907.70,414.84) scale(0.978)"><circle r="4.5" fill="#9b9b9b"/><path d="M-1.55,-1.1C-1.55,-2.1 -0.85,-2.7 0.05,-2.7C0.95,-2.7 1.6,-2.1 1.6,-1.3C1.6,-0.2 0.1,-0.1 0.1,1.0" fill="none" stroke="#fff" stroke-width="1.15"/><circle cx="0.1" cy="2.45" r="0.72" fill="#fff"/></g>
<circle cx="929.6" cy="411.54" r="1.12" fill="#6a6a6a"/>
<circle cx="929.6" cy="414.84" r="1.12" fill="#6a6a6a"/>
<circle cx="929.6" cy="418.14" r="1.12" fill="#6a6a6a"/>
<g transform="translate(142.50,437.26) scale(1.000)"><circle r="4.5" fill="#e9bf20"/><circle cx="0" cy="-2.1" r="0.8" fill="#fff"/><rect x="-0.75" y="-0.7" width="1.5" height="3.5" rx="0.3" fill="#fff"/></g>
<g transform="translate(907.70,437.31) scale(0.978)"><circle r="4.5" fill="#9b9b9b"/><path d="M-1.55,-1.1C-1.55,-2.1 -0.85,-2.7 0.05,-2.7C0.95,-2.7 1.6,-2.1 1.6,-1.3C1.6,-0.2 0.1,-0.1 0.1,1.0" fill="none" stroke="#fff" stroke-width="1.15"/><circle cx="0.1" cy="2.45" r="0.72" fill="#fff"/></g>
<circle cx="929.6" cy="434.01" r="1.12" fill="#6a6a6a"/>
<circle cx="929.6" cy="437.31" r="1.12" fill="#6a6a6a"/>
<circle cx="929.6" cy="440.61" r="1.12" fill="#6a6a6a"/>
<g transform="translate(142.50,459.73) scale(1.000)"><circle r="4.5" fill="#e9bf20"/><circle cx="0" cy="-2.1" r="0.8" fill="#fff"/><rect x="-0.75" y="-0.7" width="1.5" height="3.5" rx="0.3" fill="#fff"/></g>
<g transform="translate(907.70,459.78) scale(0.978)"><circle r="4.5" fill="#9b9b9b"/><path d="M-1.55,-1.1C-1.55,-2.1 -0.85,-2.7 0.05,-2.7C0.95,-2.7 1.6,-2.1 1.6,-1.3C1.6,-0.2 0.1,-0.1 0.1,1.0" fill="none" stroke="#fff" stroke-width="1.15"/><circle cx="0.1" cy="2.45" r="0.72" fill="#fff"/></g>
<circle cx="929.6" cy="456.48" r="1.12" fill="#6a6a6a"/>
<circle cx="929.6" cy="459.78" r="1.12" fill="#6a6a6a"/>
<circle cx="929.6" cy="463.08" r="1.12" fill="#6a6a6a"/>
<g transform="translate(142.50,482.20) scale(1.000)"><circle r="4.5" fill="#e9bf20"/><circle cx="0" cy="-2.1" r="0.8" fill="#fff"/><rect x="-0.75" y="-0.7" width="1.5" height="3.5" rx="0.3" fill="#fff"/></g>
<g transform="translate(907.70,482.25) scale(0.978)"><circle r="4.5" fill="#9b9b9b"/><path d="M-1.55,-1.1C-1.55,-2.1 -0.85,-2.7 0.05,-2.7C0.95,-2.7 1.6,-2.1 1.6,-1.3C1.6,-0.2 0.1,-0.1 0.1,1.0" fill="none" stroke="#fff" stroke-width="1.15"/><circle cx="0.1" cy="2.45" r="0.72" fill="#fff"/></g>
<circle cx="929.6" cy="478.95" r="1.12" fill="#6a6a6a"/>
<circle cx="929.6" cy="482.25" r="1.12" fill="#6a6a6a"/>
<circle cx="929.6" cy="485.55" r="1.12" fill="#6a6a6a"/>
<g transform="translate(142.50,504.67) scale(1.000)"><circle r="4.5" fill="#e9bf20"/><circle cx="0" cy="-2.1" r="0.8" fill="#fff"/><rect x="-0.75" y="-0.7" width="1.5" height="3.5" rx="0.3" fill="#fff"/></g>
<g transform="translate(907.70,504.72) scale(0.978)"><circle r="4.5" fill="#9b9b9b"/><path d="M-1.55,-1.1C-1.55,-2.1 -0.85,-2.7 0.05,-2.7C0.95,-2.7 1.6,-2.1 1.6,-1.3C1.6,-0.2 0.1,-0.1 0.1,1.0" fill="none" stroke="#fff" stroke-width="1.15"/><circle cx="0.1" cy="2.45" r="0.72" fill="#fff"/></g>
<circle cx="929.6" cy="501.42" r="1.12" fill="#6a6a6a"/>
<circle cx="929.6" cy="504.72" r="1.12" fill="#6a6a6a"/>
<circle cx="929.6" cy="508.02" r="1.12" fill="#6a6a6a"/>
<g transform="translate(142.50,527.14) scale(1.000)"><circle r="4.5" fill="#e9bf20"/><circle cx="0" cy="-2.1" r="0.8" fill="#fff"/><rect x="-0.75" y="-0.7" width="1.5" height="3.5" rx="0.3" fill="#fff"/></g>
<g transform="translate(907.70,527.19) scale(0.978)"><circle r="4.5" fill="#9b9b9b"/><path d="M-1.55,-1.1C-1.55,-2.1 -0.85,-2.7 0.05,-2.7C0.95,-2.7 1.6,-2.1 1.6,-1.3C1.6,-0.2 0.1,-0.1 0.1,1.0" fill="none" stroke="#fff" stroke-width="1.15"/><circle cx="0.1" cy="2.45" r="0.72" fill="#fff"/></g>
<circle cx="929.6" cy="523.89" r="1.12" fill="#6a6a6a"/>
<circle cx="929.6" cy="527.19" r="1.12" fill="#6a6a6a"/>
<circle cx="929.6" cy="530.49" r="1.12" fill="#6a6a6a"/>
<g transform="translate(142.50,549.61) scale(1.000)"><circle r="4.5" fill="#e9bf20"/><circle cx="0" cy="-2.1" r="0.8" fill="#fff"/><rect x="-0.75" y="-0.7" width="1.5" height="3.5" rx="0.3" fill="#fff"/></g>
<g transform="translate(907.70,549.66) scale(0.978)"><circle r="4.5" fill="#9b9b9b"/><path d="M-1.55,-1.1C-1.55,-2.1 -0.85,-2.7 0.05,-2.7C0.95,-2.7 1.6,-2.1 1.6,-1.3C1.6,-0.2 0.1,-0.1 0.1,1.0" fill="none" stroke="#fff" stroke-width="1.15"/><circle cx="0.1" cy="2.45" r="0.72" fill="#fff"/></g>
<circle cx="929.6" cy="546.36" r="1.12" fill="#6a6a6a"/>
<circle cx="929.6" cy="549.66" r="1.12" fill="#6a6a6a"/>
<circle cx="929.6" cy="552.96" r="1.12" fill="#6a6a6a"/>
<g transform="translate(142.50,572.08) scale(1.000)"><circle r="4.5" fill="#3568d4"/><circle cx="0" cy="-2.1" r="0.8" fill="#fff"/><rect x="-0.75" y="-0.7" width="1.5" height="3.5" rx="0.3" fill="#fff"/></g>
<g transform="translate(907.70,572.13) scale(0.978)"><circle r="4.5" fill="#9b9b9b"/><path d="M-1.55,-1.1C-1.55,-2.1 -0.85,-2.7 0.05,-2.7C0.95,-2.7 1.6,-2.1 1.6,-1.3C1.6,-0.2 0.1,-0.1 0.1,1.0" fill="none" stroke="#fff" stroke-width="1.15"/><circle cx="0.1" cy="2.45" r="0.72" fill="#fff"/></g>
<circle cx="929.6" cy="568.83" r="1.12" fill="#6a6a6a"/>
<circle cx="929.6" cy="572.13" r="1.12" fill="#6a6a6a"/>
<circle cx="929.6" cy="575.43" r="1.12" fill="#6a6a6a"/>
<circle cx="1006" cy="626.4" r="14.1" fill="#fff"/><circle cx="1006" cy="626.4" r="12.7" fill="#252d4a"/><rect x="1005.3" y="618.8" width="1.4" height="1.4" fill="#c9d2f5"/>
<path transform="translate(268.46,411.64)" d="M3.6,0L0,4.1H2.5L1.8,7.2L6.1,2.9H3.4L4.9,0Z" fill="#1a1a1a"/>
<path transform="translate(265.43,434.11)" d="M3.6,0L0,4.1H2.5L1.8,7.2L6.1,2.9H3.4L4.9,0Z" fill="#1a1a1a"/>
<path transform="translate(212.91,456.58)" d="M3.6,0L0,4.1H2.5L1.8,7.2L6.1,2.9H3.4L4.9,0Z" fill="#1a1a1a"/>
<path transform="translate(318.13,479.05)" d="M3.6,0L0,4.1H2.5L1.8,7.2L6.1,2.9H3.4L4.9,0Z" fill="#1a1a1a"/>
<path transform="translate(210.66,501.52)" d="M3.6,0L0,4.1H2.5L1.8,7.2L6.1,2.9H3.4L4.9,0Z" fill="#1a1a1a"/>
<path transform="translate(209.32,546.46)" d="M3.6,0L0,4.1H2.5L1.8,7.2L6.1,2.9H3.4L4.9,0Z" fill="#1a1a1a"/>

</svg>
<div id="tx">
<div class="t" style="top:13.81px;font-size:9.5px;line-height:12.0px;color:#333;letter-spacing:0.002px;left:9.82px;">Overview</div>
<div class="t" style="top:30.51px;font-size:9.5px;line-height:12.0px;color:#333;letter-spacing:-0.125px;left:10.25px;">All Issues</div>
<div class="t" style="top:47.41px;font-size:9.5px;line-height:12.0px;color:#333;letter-spacing:-0.008px;left:20.50px;">Alerts</div>
<div class="t" style="top:64.11px;font-size:9.5px;line-height:12.0px;color:#333;letter-spacing:0.085px;left:9.78px;">Crawl log</div>
<div class="t" style="top:81.01px;font-size:9.5px;line-height:12.0px;color:#333;letter-spacing:0.071px;left:9.49px;">Bulk export</div>
<div class="t" style="top:105.28px;font-size:9.3px;line-height:12.0px;color:#222;font-weight:700;letter-spacing:-0.181px;left:10.31px;">Tools</div>
<div class="t" style="top:121.91px;font-size:9.5px;line-height:12.0px;color:#333;letter-spacing:-0.074px;left:9.49px;">Page explorer</div>
<div class="t" style="top:138.91px;font-size:9.5px;line-height:12.0px;color:#333;letter-spacing:-0.04px;left:9.49px;">Link explorer</div>
<div class="t" style="top:155.51px;font-size:9.5px;line-height:12.0px;color:#333;letter-spacing:0.025px;left:9.39px;">Internal link opportunities</div>
<div class="t" style="top:172.01px;font-size:9.5px;line-height:12.0px;color:#333;letter-spacing:-0.021px;left:9.82px;">Structure explorer</div>
<div class="t" style="top:196.58px;font-size:9.3px;line-height:12.0px;color:#222;font-weight:700;letter-spacing:-0.139px;left:9.80px;">Reports</div>
<div class="t" style="top:213.41px;font-size:9.5px;line-height:12.0px;color:#333;letter-spacing:0.004px;left:9.39px;">Internal pages</div>
<div class="t" style="top:230.21px;font-size:9.5px;line-height:12.0px;color:#333;letter-spacing:0.01px;left:9.39px;">Indexability</div>
<div class="t" style="top:246.51px;font-size:9.5px;line-height:12.0px;color:#333;letter-spacing:0.103px;left:9.49px;">Links</div>
<div class="t" style="top:263.21px;font-size:9.5px;line-height:12.0px;color:#333;letter-spacing:-0.068px;left:9.49px;">Redirects</div>
<div class="t" style="top:280.21px;font-size:9.5px;line-height:12.0px;color:#333;letter-spacing:-0.005px;left:9.78px;">Content</div>
<div class="t" style="top:296.91px;font-size:9.5px;line-height:12.0px;color:#333;letter-spacing:-0.05px;left:9.82px;">Social tags</div>
<div class="t" style="top:313.61px;font-size:9.5px;line-height:12.0px;color:#333;letter-spacing:0.003px;left:9.49px;">Duplicates</div>
<div class="t" style="top:330.21px;font-size:9.5px;line-height:12.0px;color:#333;letter-spacing:0.038px;left:9.49px;">Localization</div>
<div class="t" style="top:346.91px;font-size:9.5px;line-height:12.0px;color:#333;letter-spacing:0.065px;left:9.49px;">Performance</div>
<div class="t" style="top:370.81px;font-size:9.5px;line-height:12.0px;color:#333;letter-spacing:0.025px;left:9.39px;">Images</div>
<div class="t" style="top:387.71px;font-size:9.5px;line-height:12.0px;color:#333;letter-spacing:0.008px;left:10.11px;">JavaScript</div>
<div class="t" style="top:404.85px;font-size:9.1px;line-height:12.0px;color:#333;letter-spacing:-0.168px;left:9.79px;">CSS</div>
<div class="t" style="top:428.81px;font-size:9.5px;line-height:12.0px;color:#333;letter-spacing:-0.036px;left:9.49px;">External pages</div>
<div class="t" style="top:30.63px;font-size:8px;line-height:12.0px;color:#333;left:-91.00px;width:400px;text-align:center;">9</div>
<div class="t" style="top:47.97px;font-size:7.6px;line-height:12.0px;color:#fff;left:-141.80px;width:400px;text-align:center;">New</div>
<div class="t" style="top:12.66px;font-size:11.95px;line-height:12.0px;color:#1f1f1f;font-weight:700;letter-spacing:0.0px;left:149.42px;">Overview</div>
<div class="t" style="top:13.61px;font-size:9.5px;line-height:12.0px;color:#6c6c6c;letter-spacing:0.027px;left:225.54px;">How to use</div>
<div class="t" style="top:13.48px;font-size:9.3px;line-height:12.0px;color:#333;letter-spacing:-0.002px;left:959.46px;">Print to PDF</div>
<div class="t" style="top:48.00px;font-size:8.95px;line-height:12.0px;color:#222;font-weight:700;letter-spacing:-0.007px;left:138.14px;">Crawled URLs distribution</div>
<div class="t" style="top:48.12px;font-size:8.6px;line-height:12.0px;color:#3353b5;letter-spacing:-0.294px;left:266.86px;">301</div>
<div class="t" style="top:100.65px;font-size:8.5px;line-height:12.0px;color:#333;letter-spacing:0.167px;left:231.44px;">Internal</div>
<div class="t" style="top:100.69px;font-size:8.4px;line-height:12.0px;color:#333;letter-spacing:-0.468px;left:264.57px;">167</div>
<div class="t" style="top:119.25px;font-size:8.5px;line-height:12.0px;color:#333;letter-spacing:0.043px;left:231.52px;">Resources</div>
<div class="t" style="top:119.22px;font-size:8.6px;line-height:12.0px;color:#333;letter-spacing:-0.13px;left:275.66px;">134</div>
<div class="t" style="top:182.09px;font-size:8.98px;line-height:12.0px;color:#222;font-weight:700;letter-spacing:0.007px;left:138.24px;">Crawl status of links found</div>
<div class="t" style="top:182.12px;font-size:8.6px;line-height:12.0px;color:#3353b5;letter-spacing:0.086px;left:269.66px;">3,070</div>
<div class="t" style="top:224.62px;font-size:8.6px;line-height:12.0px;color:#333;letter-spacing:0.238px;left:231.57px;">Crawled</div>
<div class="t" style="top:224.62px;font-size:8.6px;line-height:12.0px;color:#333;letter-spacing:-0.31px;left:267.57px;">2,147</div>
<div class="t" style="top:243.42px;font-size:8.6px;line-height:12.0px;color:#333;letter-spacing:0.191px;left:231.35px;">Uncrawled</div>
<div class="t" style="top:243.32px;font-size:8.9px;line-height:12.0px;color:#333;letter-spacing:0.28px;left:277.24px;">884</div>
<div class="t" style="top:262.22px;font-size:8.6px;line-height:12.0px;color:#333;letter-spacing:0.116px;left:231.31px;">Blocked by robots.txt</div>
<div class="t" style="top:262.05px;font-size:9.1px;line-height:12.0px;color:#333;letter-spacing:0.273px;left:317.44px;">39</div>
<div class="t" style="top:48.00px;font-size:8.95px;line-height:12.0px;color:#222;font-weight:700;letter-spacing:0.124px;left:415.42px;">Health Score</div>
<div class="t" style="top:172.73px;font-size:8.0px;line-height:12.0px;color:#fff;left:338.60px;width:400px;text-align:center;-webkit-text-stroke:0;">Excellent</div>
<div class="t" style="top:193.88px;font-size:8.72px;line-height:12.0px;color:#8a8a8a;letter-spacing:-0.0px;left:338.50px;width:400px;text-align:center;">Health Score reflects the proportion of internal URLs on your</div>
<div class="t" style="top:204.16px;font-size:8.78px;line-height:12.0px;color:#8a8a8a;letter-spacing:0.0px;left:338.50px;width:400px;text-align:center;">site that don't have errors</div>
<div class="t" style="top:236.37px;font-size:7.6px;line-height:12.0px;color:#b8b8b8;letter-spacing:-0.359px;right:362.77px;">100</div>
<div class="t" style="top:253.67px;font-size:7.6px;line-height:12.0px;color:#b8b8b8;letter-spacing:0.134px;right:362.28px;">50</div>
<div class="t" style="top:272.97px;font-size:7.6px;line-height:12.0px;color:#b8b8b8;right:362.73px;">0</div>
<div class="t" style="top:276.37px;font-size:7.6px;line-height:12.0px;color:#a8a8a8;letter-spacing:-0.025px;left:436.82px;">28 Jan</div>
<div class="t" style="top:48.26px;font-size:9.05px;line-height:12.0px;color:#222;font-weight:700;letter-spacing:0.026px;left:692.11px;">Issues distribution</div>
<div class="t" style="top:48.15px;font-size:8.8px;line-height:12.0px;color:#8a8a8a;letter-spacing:0.272px;left:789.52px;">434</div>
<div class="t" style="top:83.55px;font-size:8.8px;line-height:12.0px;color:#333;letter-spacing:0.095px;left:692.00px;">Errors</div>
<div class="t" style="top:83.55px;font-size:8.8px;line-height:12.0px;color:#3353b5;left:726.15px;">0</div>
<div class="t" style="top:104.95px;font-size:8.8px;line-height:12.0px;color:#333;letter-spacing:-0.011px;left:692.66px;">Warnings</div>
<div class="t" style="top:104.85px;font-size:9.1px;line-height:12.0px;color:#3353b5;letter-spacing:0.288px;left:739.74px;">346</div>
<div class="t" style="top:125.95px;font-size:8.8px;line-height:12.0px;color:#333;letter-spacing:0.177px;left:692.00px;">Notices</div>
<div class="t" style="top:125.88px;font-size:9.0px;line-height:12.0px;color:#3353b5;letter-spacing:0.33px;left:732.54px;">88</div>
<div class="t" style="top:181.79px;font-size:8.97px;line-height:12.0px;color:#222;font-weight:700;letter-spacing:-0.001px;left:692.42px;">Error distribution</div>
<div class="t" style="top:181.72px;font-size:8.6px;line-height:12.0px;color:#8a8a8a;letter-spacing:-0.344px;left:782.66px;">319</div>
<div class="t" style="top:243.22px;font-size:8.59px;line-height:12.0px;color:#333;letter-spacing:0.053px;left:786.06px;">URLs without errors</div>
<div class="t" style="top:243.22px;font-size:8.6px;line-height:12.0px;color:#333;letter-spacing:-0.444px;left:866.96px;">319</div>
<div class="t" style="top:315.42px;font-size:8.9px;line-height:12.0px;color:#222;font-weight:700;letter-spacing:-0.01px;left:138.61px;">Top Issues</div>
<div class="t" style="top:315.08px;font-size:9.3px;line-height:12.0px;color:#333;letter-spacing:0.01px;left:864.26px;">Export all issues</div>
<div class="t" style="top:342.42px;font-size:8.6px;line-height:12.0px;color:#222;font-weight:700;letter-spacing:-0.164px;left:138.14px;">Issue</div>
<div class="t" style="top:342.39px;font-size:8.7px;line-height:12.0px;color:#222;font-weight:700;letter-spacing:0.028px;right:575.11px;">Crawled</div>
<div class="t" style="top:342.39px;font-size:8.7px;line-height:12.0px;color:#222;font-weight:700;letter-spacing:-0.095px;right:496.32px;">Change</div>
<div class="t" style="top:342.39px;font-size:8.7px;line-height:12.0px;color:#222;font-weight:700;letter-spacing:0.032px;right:416.79px;">Added</div>
<div class="t" style="top:342.39px;font-size:8.7px;line-height:12.0px;color:#222;font-weight:700;letter-spacing:0.122px;right:339.71px;">New</div>
<div class="t" style="top:342.39px;font-size:8.7px;line-height:12.0px;color:#222;font-weight:700;letter-spacing:-0.153px;right:259.57px;">Removed</div>
<div class="t" style="top:342.39px;font-size:8.7px;line-height:12.0px;color:#222;font-weight:700;letter-spacing:-0.005px;right:180.22px;">Missing</div>
<div class="t" id="r0" style="left:152.95px;top:364.04px;font-size:9.4px;letter-spacing:-0.009px;line-height:12px;color:#333;">Page has links to redirect</div>
<div class="t" style="top:364.29px;font-size:8.7px;line-height:12.0px;color:#333;letter-spacing:0.258px;right:575.06px;">155</div>
<div class="t" style="top:364.32px;font-size:8.6px;line-height:12.0px;color:#b8b8b8;right:507.69px;">0</div>
<div class="t" style="top:364.32px;font-size:8.6px;line-height:12.0px;color:#b8b8b8;right:417.59px;">0</div>
<div class="t" style="top:364.32px;font-size:8.6px;line-height:12.0px;color:#b8b8b8;right:339.79px;">0</div>
<div class="t" style="top:364.32px;font-size:8.6px;line-height:12.0px;color:#b8b8b8;right:260.19px;">0</div>
<div class="t" style="top:364.32px;font-size:8.6px;line-height:12.0px;color:#b8b8b8;right:180.89px;">0</div>
<div class="t" id="r1" style="left:152.95px;top:386.51px;font-size:9.4px;letter-spacing:0.071px;line-height:12px;color:#333;">Missing alt text</div>
<div class="t" style="top:386.58px;font-size:9.2px;line-height:12.0px;color:#333;letter-spacing:0.4px;right:574.91px;">56</div>
<div class="t" style="top:386.79px;font-size:8.6px;line-height:12.0px;color:#b8b8b8;right:507.69px;">0</div>
<div class="t" style="top:386.79px;font-size:8.6px;line-height:12.0px;color:#b8b8b8;right:417.59px;">0</div>
<div class="t" style="top:386.79px;font-size:8.6px;line-height:12.0px;color:#b8b8b8;right:339.79px;">0</div>
<div class="t" style="top:386.79px;font-size:8.6px;line-height:12.0px;color:#b8b8b8;right:260.19px;">0</div>
<div class="t" style="top:386.79px;font-size:8.6px;line-height:12.0px;color:#b8b8b8;right:180.89px;">0</div>
<div class="t" id="r2" style="left:152.95px;top:408.98px;font-size:9.4px;letter-spacing:0.090px;line-height:12px;color:#333;">Meta description too short</div>
<div class="t" style="top:409.05px;font-size:9.2px;line-height:12.0px;color:#333;letter-spacing:0.4px;right:574.82px;">52</div>
<div class="t" style="top:409.26px;font-size:8.6px;line-height:12.0px;color:#b8b8b8;right:507.69px;">0</div>
<div class="t" style="top:409.26px;font-size:8.6px;line-height:12.0px;color:#b8b8b8;right:417.59px;">0</div>
<div class="t" style="top:409.26px;font-size:8.6px;line-height:12.0px;color:#b8b8b8;right:339.79px;">0</div>
<div class="t" style="top:409.26px;font-size:8.6px;line-height:12.0px;color:#b8b8b8;right:260.19px;">0</div>
<div class="t" style="top:409.26px;font-size:8.6px;line-height:12.0px;color:#b8b8b8;right:180.89px;">0</div>
<div class="t" id="r3" style="left:152.95px;top:431.45px;font-size:9.4px;letter-spacing:0.097px;line-height:12px;color:#333;">Meta description too long</div>
<div class="t" style="top:431.52px;font-size:9.2px;line-height:12.0px;color:#333;letter-spacing:0.4px;right:574.91px;">36</div>
<div class="t" style="top:431.73px;font-size:8.6px;line-height:12.0px;color:#b8b8b8;right:507.69px;">0</div>
<div class="t" style="top:431.73px;font-size:8.6px;line-height:12.0px;color:#b8b8b8;right:417.59px;">0</div>
<div class="t" style="top:431.73px;font-size:8.6px;line-height:12.0px;color:#b8b8b8;right:339.79px;">0</div>
<div class="t" style="top:431.73px;font-size:8.6px;line-height:12.0px;color:#b8b8b8;right:260.19px;">0</div>
<div class="t" style="top:431.73px;font-size:8.6px;line-height:12.0px;color:#b8b8b8;right:180.89px;">0</div>
<div class="t" id="r4" style="left:153.51px;top:453.92px;font-size:9.4px;letter-spacing:0.055px;line-height:12px;color:#333;">Title too long</div>
<div class="t" style="top:453.99px;font-size:9.2px;line-height:12.0px;color:#333;letter-spacing:0.4px;right:574.91px;">16</div>
<div class="t" style="top:454.20px;font-size:8.6px;line-height:12.0px;color:#b8b8b8;right:507.69px;">0</div>
<div class="t" style="top:454.20px;font-size:8.6px;line-height:12.0px;color:#b8b8b8;right:417.59px;">0</div>
<div class="t" style="top:454.20px;font-size:8.6px;line-height:12.0px;color:#b8b8b8;right:339.79px;">0</div>
<div class="t" style="top:454.20px;font-size:8.6px;line-height:12.0px;color:#b8b8b8;right:260.19px;">0</div>
<div class="t" style="top:454.20px;font-size:8.6px;line-height:12.0px;color:#b8b8b8;right:180.89px;">0</div>
<div class="t" id="r5" style="left:152.95px;top:476.39px;font-size:9.4px;letter-spacing:0.054px;line-height:12px;color:#333;">Meta description tag missing or empty</div>
<div class="t" style="top:476.46px;font-size:9.2px;line-height:12.0px;color:#333;letter-spacing:0.4px;right:574.91px;">15</div>
<div class="t" style="top:476.67px;font-size:8.6px;line-height:12.0px;color:#b8b8b8;right:507.69px;">0</div>
<div class="t" style="top:476.67px;font-size:8.6px;line-height:12.0px;color:#b8b8b8;right:417.59px;">0</div>
<div class="t" style="top:476.67px;font-size:8.6px;line-height:12.0px;color:#b8b8b8;right:339.79px;">0</div>
<div class="t" style="top:476.67px;font-size:8.6px;line-height:12.0px;color:#b8b8b8;right:260.19px;">0</div>
<div class="t" style="top:476.67px;font-size:8.6px;line-height:12.0px;color:#b8b8b8;right:180.89px;">0</div>
<div class="t" id="r6" style="left:153.32px;top:498.86px;font-size:9.4px;letter-spacing:0.038px;line-height:12px;color:#333;">3XX redirect</div>
<div class="t" style="top:499.11px;font-size:8.7px;line-height:12.0px;color:#333;right:575.34px;">8</div>
<div class="t" style="top:499.14px;font-size:8.6px;line-height:12.0px;color:#b8b8b8;right:507.69px;">0</div>
<div class="t" style="top:499.14px;font-size:8.6px;line-height:12.0px;color:#b8b8b8;right:417.59px;">0</div>
<div class="t" style="top:499.14px;font-size:8.6px;line-height:12.0px;color:#b8b8b8;right:339.79px;">0</div>
<div class="t" style="top:499.14px;font-size:8.6px;line-height:12.0px;color:#b8b8b8;right:260.19px;">0</div>
<div class="t" style="top:499.14px;font-size:8.6px;line-height:12.0px;color:#b8b8b8;right:180.89px;">0</div>
<div class="t" id="r7" style="left:152.95px;top:521.33px;font-size:9.4px;letter-spacing:-0.040px;line-height:12px;color:#333;">H1 tag missing or empty</div>
<div class="t" style="top:521.58px;font-size:8.7px;line-height:12.0px;color:#333;right:575.47px;">4</div>
<div class="t" style="top:521.61px;font-size:8.6px;line-height:12.0px;color:#b8b8b8;right:507.69px;">0</div>
<div class="t" style="top:521.61px;font-size:8.6px;line-height:12.0px;color:#b8b8b8;right:417.59px;">0</div>
<div class="t" style="top:521.61px;font-size:8.6px;line-height:12.0px;color:#b8b8b8;right:339.79px;">0</div>
<div class="t" style="top:521.61px;font-size:8.6px;line-height:12.0px;color:#b8b8b8;right:260.19px;">0</div>
<div class="t" style="top:521.61px;font-size:8.6px;line-height:12.0px;color:#b8b8b8;right:180.89px;">0</div>
<div class="t" id="r8" style="left:153.32px;top:543.80px;font-size:9.4px;letter-spacing:0.099px;line-height:12px;color:#333;">302 redirect</div>
<div class="t" style="top:544.05px;font-size:8.7px;line-height:12.0px;color:#333;right:575.47px;">4</div>
<div class="t" style="top:544.08px;font-size:8.6px;line-height:12.0px;color:#b8b8b8;right:507.69px;">0</div>
<div class="t" style="top:544.08px;font-size:8.6px;line-height:12.0px;color:#b8b8b8;right:417.59px;">0</div>
<div class="t" style="top:544.08px;font-size:8.6px;line-height:12.0px;color:#b8b8b8;right:339.79px;">0</div>
<div class="t" style="top:544.08px;font-size:8.6px;line-height:12.0px;color:#b8b8b8;right:260.19px;">0</div>
<div class="t" style="top:544.08px;font-size:8.6px;line-height:12.0px;color:#b8b8b8;right:180.89px;">0</div>
<div class="t" id="r9" style="left:153.28px;top:566.27px;font-size:9.4px;letter-spacing:0.002px;line-height:12px;color:#333;">Structured data has schema.org validation error</div>
<div class="t" style="top:566.34px;font-size:9.2px;line-height:12.0px;color:#333;letter-spacing:0.4px;right:574.91px;">36</div>
<div class="t" style="top:566.55px;font-size:8.6px;line-height:12.0px;color:#b8b8b8;right:507.69px;">0</div>
<div class="t" style="top:566.55px;font-size:8.6px;line-height:12.0px;color:#b8b8b8;right:417.59px;">0</div>
<div class="t" style="top:566.55px;font-size:8.6px;line-height:12.0px;color:#b8b8b8;right:339.79px;">0</div>
<div class="t" style="top:566.55px;font-size:8.6px;line-height:12.0px;color:#b8b8b8;right:260.19px;">0</div>
<div class="t" style="top:566.55px;font-size:8.6px;line-height:12.0px;color:#b8b8b8;right:180.89px;">0</div>
<div class="t" style="top:593.28px;font-size:9.3px;line-height:12.0px;color:#3353b5;letter-spacing:0.011px;left:137.95px;">View all issues</div>
</div>
<div id="fr"></div>
</div></body></html>
